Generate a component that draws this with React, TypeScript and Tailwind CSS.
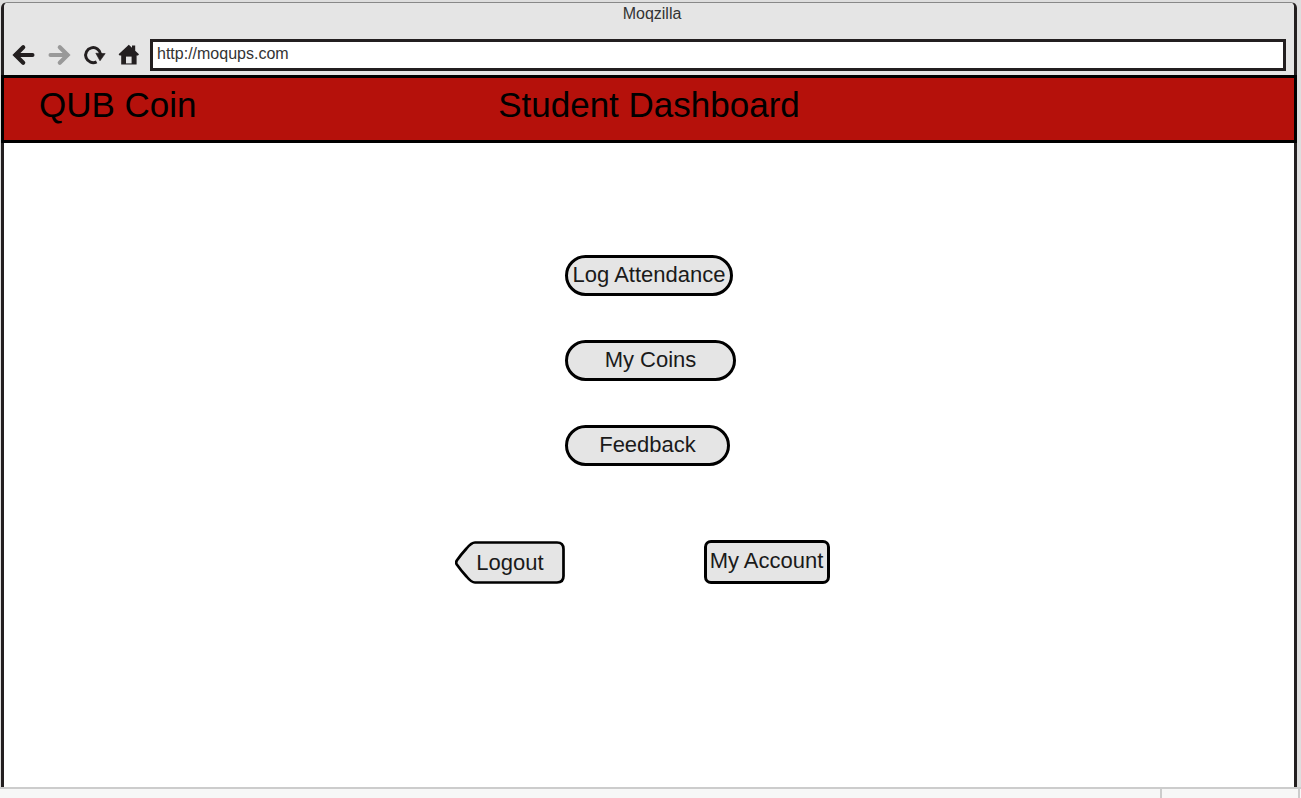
import type { ReactNode } from "react";

type ButtonProps = { label: string; className: string };

function PillButton({ label, className }: ButtonProps) {
  return (
    <button
      type="button"
      className={`h-[41px] rounded-full border-3 border-black bg-[#e5e5e5] pb-0.5 text-center text-[22px] leading-8 whitespace-nowrap ${className}`}
    >
      {label}
    </button>
  );
}

function IconButton({ label, children }: { label: string; children: ReactNode }) {
  return (
    <button type="button" aria-label={label} className="flex h-6 w-6 items-center justify-center">
      {children}
    </button>
  );
}

function ArrowIcon({ className }: { className: string }) {
  return (
    <svg viewBox="0 0 24 24" className={`h-6 w-6 shrink-0 ${className}`} fill="none" stroke="currentColor" aria-hidden="true">
      <path d="M11.2 4.2 3.4 12l7.8 7.8" strokeWidth="4.2" strokeLinecap="round" strokeLinejoin="miter" />
      <path d="M4 12h16.6" strokeWidth="3.8" strokeLinecap="round" />
    </svg>
  );
}

function ReloadIcon() {
  return (
    <svg viewBox="0 0 24 24" className="h-6 w-6 shrink-0" aria-hidden="true">
      <path d="M14.6 18.8A7.5 7.5 0 1 1 18.6 11.2" fill="none" stroke="#231f20" strokeWidth="3" strokeLinecap="butt" />
      <path d="M13.8 10.2 23.2 10.6 18 17.8Z" fill="#231f20" stroke="#231f20" strokeWidth="0.6" strokeLinejoin="round" />
    </svg>
  );
}

function HomeIcon() {
  return (
    <svg viewBox="0 0 24 24" className="h-6 w-6 shrink-0" aria-hidden="true">
      <path d="M1.6 11.3 11.8 1.8 15 4.8V2.4h3.2v5.4l3.8 3.5-1 1.3h-1.4V21.6H4.2V12.6H2.6Z" fill="#231f20" />
      <path d="M9 13.6h5.6v6.8H9Z" fill="#e5e5e5" />
    </svg>
  );
}

export default function App() {
  return (
    <div className="flex min-h-screen flex-col bg-[#dedede] font-['Liberation_Sans',Arial,sans-serif] text-[#1a1a1a]">
      <div className="mt-[2px] mr-1 ml-px flex flex-1 flex-col rounded-t-md border-x-3 border-t border-x-[#231f20] border-t-[#888888] bg-white">
        <header className="rounded-t-sm bg-[#e5e5e5] pb-1">
          <p className="pt-px pl-1.5 text-center text-[16px] leading-5 text-[#333333]">Moqzilla</p>
          <div className="flex items-center pt-[15px] pr-2 pl-2">
            <nav aria-label="Browser" className="flex w-[138px] shrink-0 gap-[11px]">
              <IconButton label="Back">
                <ArrowIcon className="text-[#231f20]" />
              </IconButton>
              <IconButton label="Forward">
                <ArrowIcon className="rotate-180 text-[#999999]" />
              </IconButton>
              <IconButton label="Reload">
                <ReloadIcon />
              </IconButton>
              <IconButton label="Home">
                <HomeIcon />
              </IconButton>
            </nav>
            <input
              type="text"
              aria-label="Address"
              defaultValue="http://moqups.com"
              className="h-8 min-w-0 flex-1 rounded-none border-3 border-[#231f20] bg-white pb-0.5 pl-1 text-[16px] leading-5 text-[#333333] outline-none"
            />
          </div>
        </header>

        <div className="-mx-[3px] grid grid-cols-[1fr_auto_1fr] items-center border-3 border-black bg-[#b5110b] pt-1 pb-3 text-[35px] leading-[46px] text-black">
          <p className="pl-[35px]">QUB Coin</p>
          <h1>Student Dashboard</h1>
        </div>

        <main className="flex flex-1 flex-col items-center pt-28">
          <div className="flex flex-col items-start gap-11 pl-[3px]">
            <PillButton label="Log Attendance" className="w-[168px]" />
            <PillButton label="My Coins" className="w-[171px]" />
            <PillButton label="Feedback" className="w-[165px]" />
          </div>
          <div className="mt-[74px] flex items-end gap-[138px] pr-[14px]">
            <button type="button" className="grid w-[111px] place-items-center">
              <svg viewBox="0 0 111 44" className="col-start-1 row-start-1 h-11 w-full" aria-hidden="true">
                <path
                  d="M20 2.5H102Q108.500 2.500 108.500 9V36Q108.500 42.500 102 42.500H20Q16.500 42.500 11.500 36.500Q6 30.500 1.800 24.500Q0.600 22.500 1.800 20.500Q6 14.500 11.500 8.500Q16.500 2.500 20 2.500Z"
                  fill="#e5e5e5"
                  stroke="#000"
                  strokeWidth="2.700"
                />
              </svg>
              <span className="col-start-1 row-start-1 pt-0.5 text-[22px] leading-8">Logout</span>
            </button>
            <button
              type="button"
              className="h-11 w-[126px] rounded-[7px] border-3 border-black bg-[#e5e5e5] pb-0.5 text-[22px] leading-8 whitespace-nowrap"
            >
              My Account
            </button>
          </div>
        </main>
      </div>

      <footer className="flex h-[11px] shrink-0 border-t-2 border-[#cccccc] bg-[#f7f7f7]">
        <div className="flex-1" />
        <div className="mr-px w-[140px] border-x-2 border-[#cccccc]" />
      </footer>
    </div>
  );
}
